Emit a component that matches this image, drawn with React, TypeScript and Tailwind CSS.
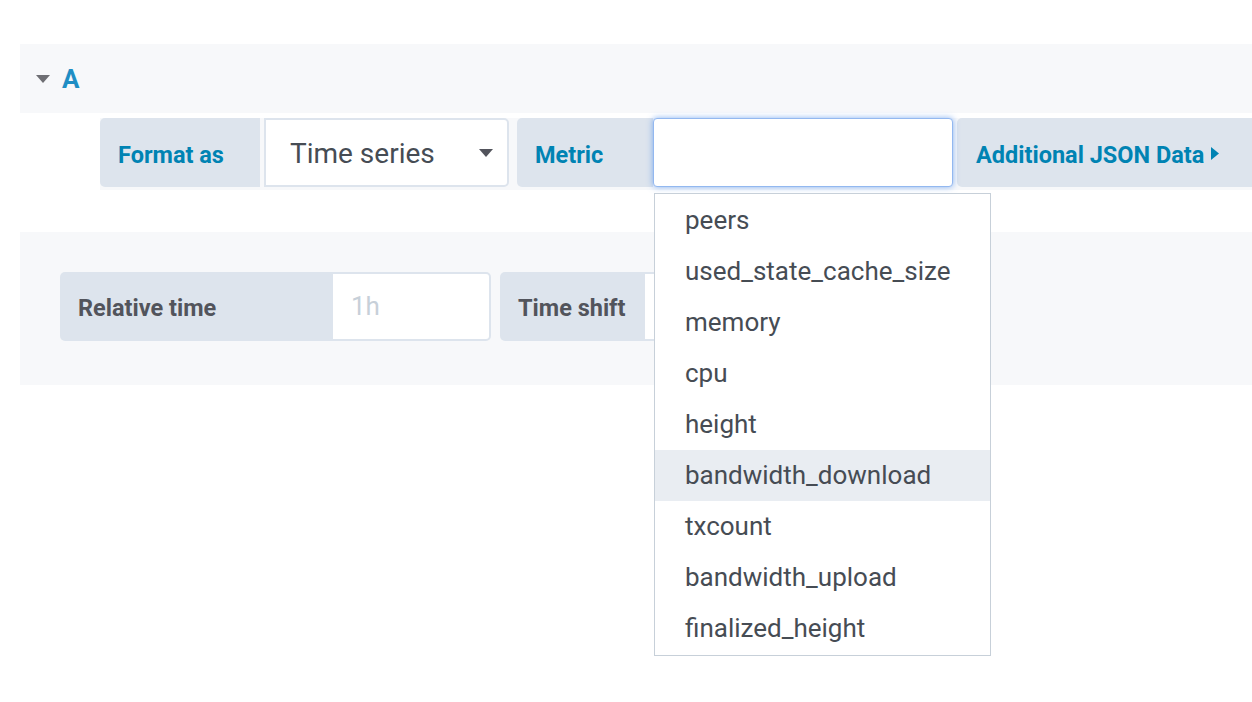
import React from "react";

const metrics = [
  "peers",
  "used_state_cache_size",
  "memory",
  "cpu",
  "height",
  "bandwidth_download",
  "txcount",
  "bandwidth_upload",
  "finalized_height",
];

const Caret = ({ className }: { className?: string }) => (
  <svg width="14" height="8" viewBox="0 0 14 8" className={className}>
    <path d="M0 0 L14 0 L7 8 Z" fill="currentColor" />
  </svg>
);

const App = () => {
  return (
    <div className="min-h-screen bg-white pt-[44px] pl-[20px] overflow-hidden" style={{ fontFamily: "Roboto, 'Liberation Sans', sans-serif" }}>
      {/* query header */}
      <div className="h-[69px] bg-[#f7f8fa] flex items-center pl-[16px] gap-[12px]">
        <Caret className="text-[#6e6e73] mt-[1px]" />
        <span className="text-[26px] font-bold text-[#1f8ec4] leading-none">A</span>
      </div>

      {/* query row */}
      <div className="mt-[5px] ml-[80px] pb-[3px] bg-[#f7f8fa] flex">
        <div className="h-[69px] flex items-center bg-[#dde4ed] rounded-l-[5px] w-[160px] pl-[18px] pt-[6px] text-[23.5px] font-bold text-[#0083b3]">
          Format as
        </div>
        <div className="ml-[4px] h-[69px] w-[245px] bg-white border-2 border-[#dde4ed] rounded-r-[5px] flex items-center justify-between pl-[24px] pr-[14px] text-[28px] text-[#464c54]">
          <span className="pt-[2px]">Time series</span>
          <Caret className="text-[#52545c]" />
        </div>
        <div className="ml-[8px] h-[69px] flex items-center bg-[#dde4ed] rounded-l-[5px] w-[136px] pl-[18px] pt-[6px] text-[23.5px] font-bold text-[#0083b3]">
          Metric
        </div>
        <div className="relative">
          <div className="h-[69px] w-[300px] bg-white border border-[#93b8f0] rounded-[4px] shadow-[0_0_6px_rgba(82,146,237,0.7)]" />
          <div className="absolute z-10 left-[1px] top-[75px] w-[337px] bg-white border border-[#c7d0d9] py-[1px]">
            {metrics.map((m) => (
              <div
                key={m}
                className={`h-[51px] flex items-center pl-[30px] text-[26px] text-[#464c54] ${m === "bandwidth_download" ? "bg-[#e9edf2]" : ""}`}
              >
                {m}
              </div>
            ))}
          </div>
        </div>
        <div className="ml-[4px] h-[69px] flex-1 flex items-center bg-[#dde4ed] rounded-l-[5px] pl-[19px] pt-[6px] text-[23.5px] font-bold text-[#0083b3] whitespace-nowrap">
          Additional JSON Data
          <svg width="8" height="13" viewBox="0 0 8 13" className="ml-[7px] mb-[4px]">
            <path d="M0 0 L8 6.5 L0 13 Z" fill="currentColor" />
          </svg>
        </div>
      </div>

      {/* query options */}
      <div className="mt-[42px] h-[153px] bg-[#f7f8fa] pt-[40px] pl-[40px] flex items-start">
        <div className="h-[69px] flex items-center bg-[#dde4ed] rounded-l-[5px] w-[273px] pl-[18px] pt-[4px] text-[23.5px] font-bold text-[#52545c]">
          Relative time
        </div>
        <div className="h-[69px] w-[158px] bg-white border-2 border-[#dde4ed] border-l-0 rounded-r-[5px] flex items-center pl-[18px] text-[26px] text-[#c7d0d9]">
          1h
        </div>
        <div className="ml-[9px] h-[69px] flex items-center bg-[#dde4ed] rounded-l-[5px] w-[145px] pl-[18px] pt-[4px] text-[23.5px] font-bold text-[#52545c]">
          Time shift
        </div>
        <div className="h-[69px] w-[200px] bg-white border-2 border-[#dde4ed] border-l-0 rounded-r-[5px]" />
      </div>
    </div>
  );
};

export default App;
